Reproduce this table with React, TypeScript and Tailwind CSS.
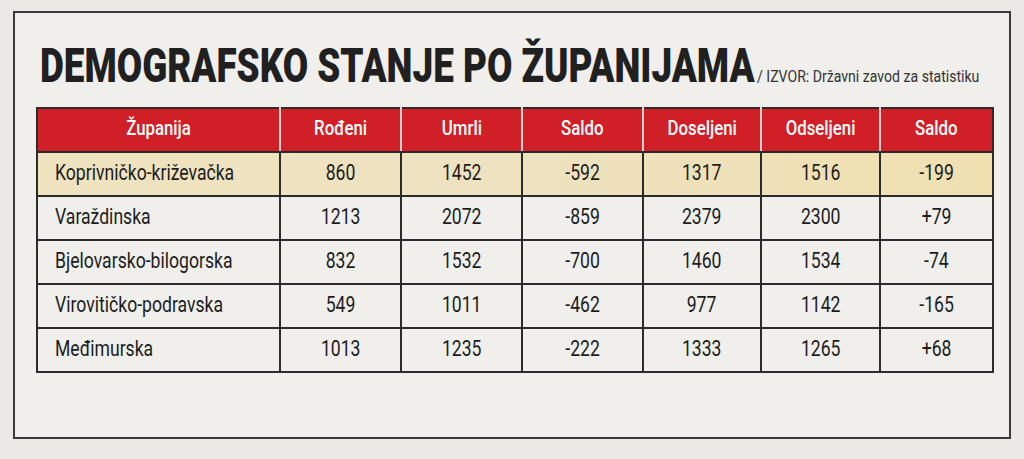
import React from 'react';

const cols = [243, 121, 121, 121, 118, 119, 113];
const heads = ['Županija', 'Rođeni', 'Umrli', 'Saldo', 'Doseljeni', 'Odseljeni', 'Saldo'];

const rows = [
  ['Koprivničko-križevačka', '860', '1452', '-592', '1317', '1516', '-199'],
  ['Varaždinska', '1213', '2072', '-859', '2379', '2300', '+79'],
  ['Bjelovarsko-bilogorska', '832', '1532', '-700', '1460', '1534', '-74'],
  ['Virovitičko-podravska', '549', '1011', '-462', '977', '1142', '-165'],
  ['Međimurska', '1013', '1235', '-222', '1333', '1265', '+68'],
];

export default function App() {
  return (
    <div className="w-[1024px] h-[459px] bg-[#ebe9e5] pt-[11px] pl-[13px] font-['Roboto',sans-serif]">
      <div className="w-[998px] h-[428px] border-2 border-[#3a3a3a] bg-[#f0efec] pt-[28px] pl-[21px]">
        {/* title */}
        <div className="flex items-baseline h-[49px] pl-[4px]">
          <div className="w-[717px] whitespace-nowrap">
            <span className="inline-block origin-left scale-x-[0.752] text-[49px] leading-none font-black text-[#202020]">
              DEMOGRAFSKO STANJE PO ŽUPANIJAMA
            </span>
          </div>
          <span className="inline-block origin-left scale-x-[0.88] whitespace-nowrap text-[16px] text-[#333]">
            / IZVOR: Državni zavod za statistiku
          </span>
        </div>

        <table className="mt-[17px] border-collapse table-fixed w-[956px]">
          <colgroup>
            {cols.map((w, i) => (
              <col key={i} style={{ width: w }} />
            ))}
          </colgroup>
          <thead>
            <tr className="h-[44px] bg-[#d11f27]">
              {heads.map((h, i) => (
                <th
                  key={i}
                  className={`p-0 border-t-2 border-b-2 border-t-[#2b2b2b] border-b-[#2b2b2b] border-x-2 ${
                    i === 0 ? 'border-l-[#2b2b2b]' : 'border-l-[#f3cfcf]'
                  } ${i === heads.length - 1 ? 'border-r-[#2b2b2b]' : 'border-r-[#f3cfcf]'} text-center`}
                >
                  <span className="inline-block scale-x-[0.84] text-[20px] font-medium text-white leading-none">
                    {h}
                  </span>
                </th>
              ))}
            </tr>
          </thead>
          <tbody>
            {rows.map((r, ri) => (
              <tr key={ri} className={`h-[44px] ${ri === 0 ? 'bg-gradient-to-r from-[#efe3bf] via-[#eee2c0] to-[#f0e0b0]' : ''}`}>
                {r.map((c, ci) => (
                  <td
                    key={ci}
                    className={`p-0 border-2 border-[#2b2b2b] ${ci === 0 ? 'text-left pl-[17px]' : 'text-center'}`}
                  >
                    <span
                      className={`inline-block scale-x-[0.8] text-[22px] leading-none text-[#1c1c1c] ${
                        ci === 0 ? 'origin-left' : ''
                      }`}
                    >
                      {c}
                    </span>
                  </td>
                ))}
              </tr>
            ))}
          </tbody>
        </table>
      </div>
    </div>
  );
}
